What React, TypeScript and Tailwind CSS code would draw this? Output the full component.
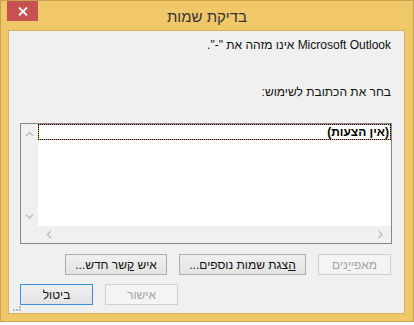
import React from "react";

// Win8-style "Check Names" dialog (Hebrew, RTL)

const FONT = "font-['Liberation_Sans','DejaVu_Sans',sans-serif]";

function Chevron({ dir }: { dir: "up" | "down" | "left" | "right" }) {
  const d = {
    up: "M1 5 L4.5 1.5 L8 5",
    down: "M1 1.5 L4.5 5 L8 1.5",
    left: "M5 1 L1.5 4.5 L5 8",
    right: "M1.5 1 L5 4.5 L1.5 8",
  }[dir];
  const vert = dir === "up" || dir === "down";
  return (
    <svg width={vert ? 9 : 7} height={vert ? 7 : 9} viewBox={vert ? "0 0 9 7" : "0 0 7 9"}>
      <path d={d} fill="none" stroke="#c2c2c2" strokeWidth={1.6} />
    </svg>
  );
}

function Button({
  children,
  width,
  disabled,
  isDefault,
}: {
  children: React.ReactNode;
  width: string;
  disabled?: boolean;
  isDefault?: boolean;
}) {
  const base = "h-[21px] flex items-center justify-center text-[12px] leading-none";
  if (disabled)
    return (
      <div className={`${base} ${width} border border-[#cfcfcf] bg-[#f4f4f4] text-[#a3a3a3]`}>
        {children}
      </div>
    );
  return (
    <div
      className={`${base} ${width} border ${
        isDefault ? "border-[#3c8ed7]" : "border-[#adadad]"
      } bg-gradient-to-b from-[#f0f0f0] to-[#e3e3e3] text-[#111]`}
    >
      {children}
    </div>
  );
}

export default function App() {
  return (
    <div className={`w-[414px] h-[325px] bg-white ${FONT}`}>
      <div className="w-[414px] h-[322px] bg-[#f0c869] border border-[#c8a24e] flex flex-col">
        {/* Title bar */}
        <div className="relative h-[29px] shrink-0">
          <div className="absolute left-[6px] top-0 w-[31px] h-[20px] bg-[#c75050] flex items-center justify-center">
            <svg width="10" height="9" viewBox="0 0 10 9">
              <path d="M1 0.5 L9 8.5 M9 0.5 L1 8.5" stroke="#fff" strokeWidth={1.8} />
            </svg>
          </div>
          <div dir="rtl" className="h-full flex items-center justify-center pt-[3px] text-[15px] text-[#333]">
            בדיקת שמות
          </div>
        </div>

        {/* Client area */}
        <div
          dir="rtl"
          className="relative ml-[7px] mr-[8px] h-[284px] shrink-0 bg-[#f0f0f0] border border-[#d6b25e] pl-[11px] pr-[12px]"
        >
          <div className="pt-[7px] pr-[1px] h-[15px] box-content text-[12px] leading-[15px] text-[#111]">
            Microsoft Outlook אינו מזהה את "-".
          </div>
          <div className="mt-[32px] pr-[1px] text-[12px] leading-[15px] text-[#111]">
            בחר את הכתובת לשימוש:
          </div>

          {/* List box */}
          <div className="mt-[23px] h-[121px] border border-[#828790] flex flex-col bg-white">
            <div className="flex flex-1 min-h-0">
              <div className="flex-1 bg-white">
                <div className="h-[16px] border border-dotted border-black bg-[#e0962c]">
                  <div className="h-full bg-white pr-[1px] text-[12px] leading-[14px] font-bold text-black">
                    (אין הצעות)
                  </div>
                </div>
              </div>
              <div className="w-[17px] bg-[#f0f0f0] flex flex-col items-center justify-between pt-[7px] pb-[6px]">
                <Chevron dir="up" />
                <Chevron dir="down" />
              </div>
            </div>
            <div className="h-[17px] shrink-0 bg-[#f0f0f0] flex items-center justify-between pr-[7px] pl-[25px]">
              <Chevron dir="right" />
              <Chevron dir="left" />
            </div>
          </div>

          {/* Button rows */}
          <div className="mt-[10px] flex gap-[12px] pr-[1px]">
            <Button width="w-[73px]" disabled>
              <span>
                מאפי<span className="underline">י</span>נים
              </span>
            </Button>
            <Button width="w-[127px]">
              <span>
                <span className="underline">ה</span>צגת שמות נוספים...
              </span>
            </Button>
            <Button width="w-[102px]">
              <span>
                איש <span className="underline">ק</span>שר חדש...
              </span>
            </Button>
          </div>
          <div className="mt-[9px] flex flex-row-reverse gap-[12px]">
            <Button width="w-[73px]" isDefault>
              ביטול
            </Button>
            <Button width="w-[73px]" disabled>
              אישור
            </Button>
          </div>

          {/* Size grip */}
          <svg className="absolute left-[4px] bottom-[1px]" width="9" height="6" viewBox="0 0 9 6">
            <rect x="6" y="0" width="2" height="2" fill="#b8b8b8" />
            <rect x="0" y="3" width="2" height="2" fill="#b8b8b8" />
            <rect x="3" y="3" width="2" height="2" fill="#b8b8b8" />
            <rect x="6" y="3" width="2" height="2" fill="#b8b8b8" />
          </svg>
        </div>
      </div>
    </div>
  );
}
